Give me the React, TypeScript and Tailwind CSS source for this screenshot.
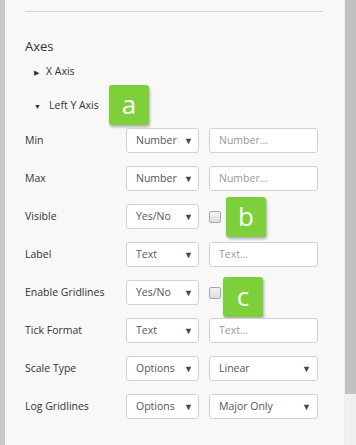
import React from 'react';

type Row = {
  label: string;
  kind: string;
  second: 'input' | 'select' | 'checkbox';
  value?: string;
  badge?: { letter: string; left: string; top: string };
};

const rows: Row[] = [
  { label: 'Min', kind: 'Number', second: 'input', value: 'Number...' },
  { label: 'Max', kind: 'Number', second: 'input', value: 'Number...' },
  { label: 'Visible', kind: 'Yes/No', second: 'checkbox', badge: { letter: 'b', left: 'left-[201px]', top: 'top-[-7px]' } },
  { label: 'Label', kind: 'Text', second: 'input', value: 'Text...' },
  { label: 'Enable Gridlines', kind: 'Yes/No', second: 'checkbox', badge: { letter: 'c', left: 'left-[198px]', top: 'top-[-3px]' } },
  { label: 'Tick Format', kind: 'Text', second: 'input', value: 'Text...' },
  { label: 'Scale Type', kind: 'Options', second: 'select', value: 'Linear' },
  { label: 'Log Gridlines', kind: 'Options', second: 'select', value: 'Major Only' },
];

const Badge = ({ letter, className }: { letter: string; className: string }) => (
  <div
    className={
      'absolute w-[40px] h-[40px] rounded-[3px] bg-[#7ed03b] text-white text-[26px] leading-none flex items-center justify-center pb-[2px] shadow-[1px_2px_3px_rgba(0,0,0,0.3)] ' +
      className
    }
  >
    {letter}
  </div>
);

const Arrow = () => <span className="text-[9px] text-[#444] leading-none">▼</span>;

export default function App() {
  return (
    <div className="flex w-[356px] h-[445px] overflow-hidden bg-[#f8f8f8] text-[#333]" style={{ fontFamily: '"Open Sans", "Noto Sans", sans-serif' }}>
      <div className="w-[5px] bg-[#c8c8c8]" />

      <div className="flex-1 pl-[20px] border-r border-[#ececec]">
        <div className="mt-[11px] w-[298px] h-px bg-[#d3d3d3]" />

        <div className="mt-[24px] text-[13px] leading-[20px]">Axes</div>

        <div className="mt-[8px] flex items-center h-[16px] text-[10.5px]">
          <span className="ml-[9px] w-[12px] text-[7px] leading-none">▶</span>
          <span>X Axis</span>
        </div>

        <div className="relative mt-[18px] flex items-center h-[16px] text-[10.5px]">
          <span className="ml-[9px] w-[15px] text-[7px] leading-none">▼</span>
          <span>Left Y Axis</span>
          <Badge letter="a" className="left-[84px] top-[-13px]" />
        </div>

        <div className="mt-[14px] flex flex-col gap-[13px]">
          {rows.map((r) => (
            <div key={r.label} className="relative flex items-center h-[25px] text-[10.5px]">
              <div className="w-[101px]">{r.label}</div>
              <div className="w-[73px] h-[25px] bg-white border border-[#d0d0d0] rounded-[3px] flex items-center justify-between pl-[9px] pr-[5px] text-[#555]">
                <span>{r.kind}</span>
                <Arrow />
              </div>
              {r.second === 'input' && (
                <div className="ml-[10px] w-[109px] h-[25px] bg-white border border-[#d0d0d0] rounded-[3px] flex items-center pl-[9px] text-[#999]">
                  {r.value}
                </div>
              )}
              {r.second === 'select' && (
                <div className="ml-[10px] w-[109px] h-[25px] bg-white border border-[#d0d0d0] rounded-[3px] flex items-center justify-between pl-[9px] pr-[6px] text-[#555]">
                  <span>{r.value}</span>
                  <Arrow />
                </div>
              )}
              {r.second === 'checkbox' && (
                <div className="ml-[10px] w-[12px] h-[12px] rounded-[2px] border border-[#a8a8a8] bg-gradient-to-b from-[#f4f4f4] to-[#dedede]" />
              )}
              {r.badge && <Badge letter={r.badge.letter} className={r.badge.left + ' ' + r.badge.top} />}
            </div>
          ))}
        </div>
      </div>

      <div className="w-[11px] flex flex-col bg-[#f0f0f0]">
        <div className="h-[394px] bg-[#c1c1c1]" />
      </div>
    </div>
  );
}
